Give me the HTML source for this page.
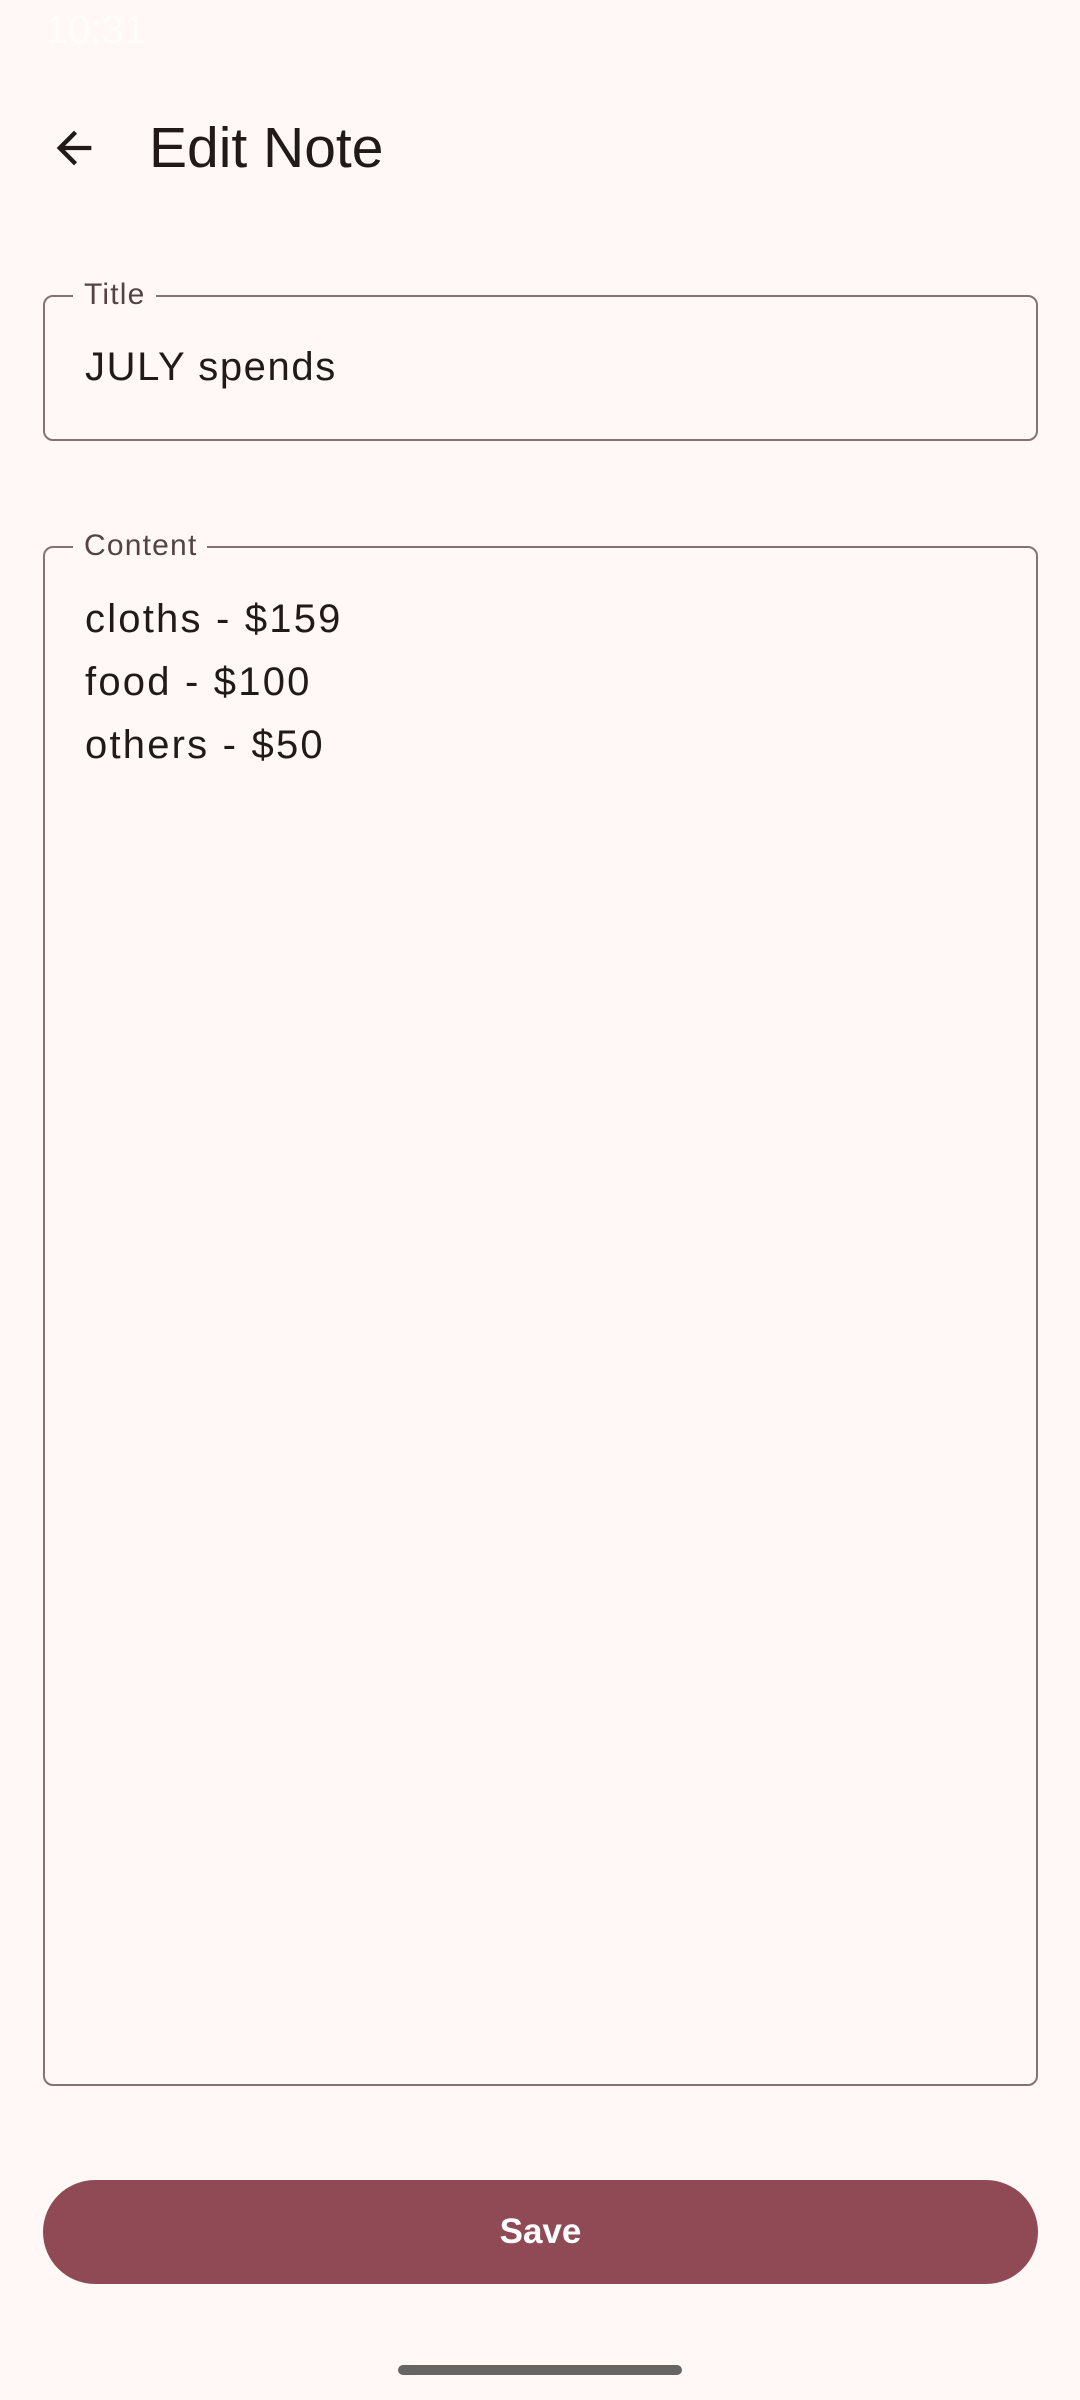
<!DOCTYPE html>
<html><head><meta charset="utf-8"><style>
html,body{margin:0;padding:0;}
body{width:1080px;height:2400px;background:#fff8f6;position:relative;overflow:hidden;font-family:"Liberation Sans",sans-serif;color:#231919;}
.box{position:absolute;left:43px;width:995px;border:2.6px solid #857373;border-radius:10px;box-sizing:border-box;}
.lbl{position:absolute;left:28px;top:-22px;background:#fff8f6;padding:0 10px 0 11px;font-size:30px;letter-spacing:1.2px;color:#534343;line-height:40px;}
.txt{position:absolute;left:40px;font-size:40px;}
</style></head><body>
<div style="position:absolute;left:46px;top:8px;font-size:40px;color:#fff;opacity:.7">10:31</div>
<svg style="position:absolute;left:48px;top:122px" width="52" height="52" viewBox="0 0 24 24"><path d="M20 11H7.83l5.59-5.59L12 4l-8 8 8 8 1.41-1.41L7.83 13H20z" fill="#231919"/></svg>
<div style="position:absolute;left:149px;top:113px;font-size:57px;line-height:70px;color:#231919">Edit Note</div>

<div class="box" style="top:295px;height:146px;">
  <div class="lbl">Title</div>
  <div class="txt" style="top:48px;letter-spacing:1.6px;">JULY spends</div>
</div>

<div class="box" style="top:546px;height:1540px;">
  <div class="lbl">Content</div>
  <div class="txt" style="top:40px;line-height:63px;letter-spacing:2.2px;">cloths - $159<br>food - $100<br>others - $50</div>
</div>

<div style="position:absolute;left:43px;top:2180px;width:995px;height:104px;border-radius:52px;background:#8f4a55;color:#fff;font-size:35px;font-weight:bold;text-align:center;line-height:104px;">Save</div>
<div style="position:absolute;left:398px;top:2365px;width:284px;height:10px;border-radius:5px;background:#676563;"></div>
</body></html>
